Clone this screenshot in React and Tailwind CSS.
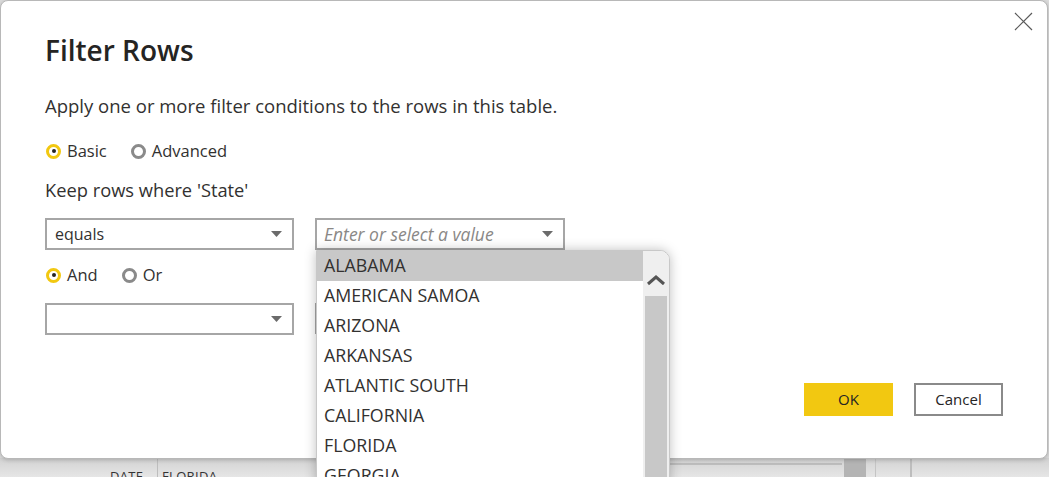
import React from 'react';

const font = { fontFamily: '"Open Sans", "Noto Sans", Arial, sans-serif' };

const states = [
  'ALABAMA',
  'AMERICAN SAMOA',
  'ARIZONA',
  'ARKANSAS',
  'ATLANTIC SOUTH',
  'CALIFORNIA',
  'FLORIDA',
  'GEORGIA',
];

function Caret() {
  return (
    <svg width="11" height="6" viewBox="0 0 11 6" className="shrink-0">
      <path d="M0 0 H11 L5.5 6 Z" fill="#6b6b6b" />
    </svg>
  );
}

function Radio({ checked, label }) {
  return (
    <label className="flex items-center gap-[6px]">
      {checked ? (
        <span className="w-[15px] h-[15px] rounded-full border-[3px] border-[#f2c811] flex items-center justify-center">
          <span className="w-[4px] h-[4px] rounded-full bg-[#252423]" />
        </span>
      ) : (
        <span className="w-[15px] h-[15px] rounded-full border-[3px] border-[#8a8a8a]" />
      )}
      <span>{label}</span>
    </label>
  );
}

function Select({ value }) {
  return (
    <div className="w-[249px] h-[32px] border-2 border-[#a6a6a6] flex items-center justify-between pl-[8px] pr-[10px] bg-white text-[16px]">
      <span>{value}</span>
      <Caret />
    </div>
  );
}

export default function App() {
  return (
    <div style={font} className="relative w-[1049px] h-[477px] overflow-hidden bg-[#dcdcdc] text-[#323130]">
      {/* app behind the dialog */}
      <div className="absolute left-0 right-0 top-[458px] bottom-0 bg-gradient-to-b from-[#d2d2d2] to-[#e6e6e6]">
        <div className="absolute left-[157px] top-0 bottom-0 w-px bg-[#bdbdbd]" />
        <div className="absolute left-[668px] right-[207px] top-[5px] h-[2px] bg-[#bcbcbc]" />
        <div className="absolute left-[844px] w-[22px] top-0 bottom-0 bg-[#b4b4b4]" />
        <div className="absolute left-[875px] top-0 bottom-0 w-px bg-[#c4c4c4]" />
        <div className="absolute left-[910px] top-0 bottom-0 w-[2px] bg-[#bdbdbd]" />
        <span className="absolute left-[110px] top-[10px] text-[13px] leading-[16px] text-[#333] tracking-wide">DATE</span>
        <span className="absolute left-[162px] top-[10px] text-[13px] leading-[16px] text-[#333] tracking-wide">FLORIDA</span>
      </div>

      {/* dialog */}
      <div className="relative w-[1048px] h-[459px] bg-white border border-[#b8b8b8] rounded-[8px] shadow-[0_1px_4px_rgba(0,0,0,0.2)]">
        <button className="absolute right-[14px] top-[11px]">
          <svg width="19" height="19" viewBox="0 0 19 19">
            <path d="M1 1 L18 18 M18 1 L1 18" stroke="#5a5a5a" strokeWidth="1.2" />
          </svg>
        </button>

        <div className="pl-[44px] pt-[31px]">
          <h1 className="text-[28px] font-semibold text-[#252423] leading-[36px]">Filter Rows</h1>

          <p className="mt-[26px] text-[18.5px] leading-[24px]">Apply one or more filter conditions to the rows in this table.</p>

          <div className="mt-[22px] flex items-center gap-[24px] h-[22px] pl-[1px] text-[16.5px]">
            <Radio checked label="Basic" />
            <Radio label="Advanced" />
          </div>

          <p className="mt-[16px] text-[18.3px] leading-[24px]">Keep rows where 'State'</p>

          <div className="mt-[16px] flex gap-[21px]">
            <Select value="equals" />
            <div className="w-[250px] h-[32px] border-2 border-[#a6a6a6] flex items-center justify-between pl-[7px] pr-[10px] bg-white">
              <span className="italic text-[#8a8886] text-[17.5px]">Enter or select a value</span>
              <Caret />
            </div>
          </div>

          <div className="mt-[14px] flex items-center gap-[24px] h-[22px] pl-[1px] text-[16.5px]">
            <Radio checked label="And" />
            <Radio label="Or" />
          </div>

          <div className="mt-[17px] flex gap-[21px]">
            <Select value="" />
            <div className="w-[250px] h-[31px] border-2 border-[#a6a6a6] bg-white" />
          </div>
        </div>

        <div className="absolute right-[44px] top-[382px] flex gap-[21px] text-[15px]">
          <button className="w-[89px] h-[33px] bg-[#f2c811] text-[#252423]">OK</button>
          <button className="w-[89px] h-[33px] border-2 border-[#8a8a8a] bg-white text-[#252423]">Cancel</button>
        </div>
      </div>

      {/* value dropdown list */}
      <div className="absolute left-[316px] top-[250px] w-[354px] h-[240px] bg-white border border-[#c8c8c8] rounded-tr-[10px] shadow-[0_0_12px_rgba(0,0,0,0.25)] flex overflow-hidden">
        <ul className="flex-1 text-[17.8px]">
          {states.map((s, i) => (
            <li
              key={s}
              className={`h-[30px] leading-[29px] pl-[7px] ${i === 0 ? 'bg-[#c8c8c8]' : ''}`}
            >
              {s}
            </li>
          ))}
        </ul>
        <div className="w-[26px] bg-[#efefef] flex flex-col items-center pt-[24px]">
          <svg width="18" height="11" viewBox="0 0 18 11">
            <path d="M1 9 L9 2 L17 9" fill="none" stroke="#555" strokeWidth="3" />
          </svg>
          <div className="mt-[10px] w-[22px] flex-1 bg-[#c8c8c8]" />
        </div>
      </div>
    </div>
  );
}
